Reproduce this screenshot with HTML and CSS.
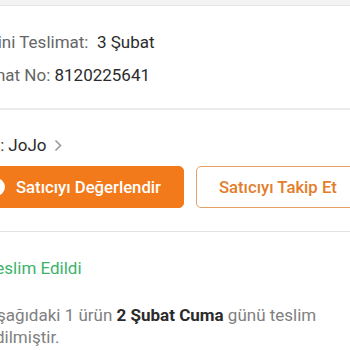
FILE: index.html
```html
<!DOCTYPE html>
<html lang="tr">
<head>
<meta charset="utf-8">
<link rel="stylesheet" href="styles.css">
</head>
<body>
<div class="topbar"></div>
<main class="page">
  <section class="info">
    <div class="row"><span class="label">Tahmini Teslimat:</span>&nbsp; <span class="value">3 Şubat</span></div>
    <div class="row"><span class="label">Teslimat No:</span> <span class="value num">8120225641</span></div>
  </section>
  <div class="divider thick"></div>
  <section class="seller">
    <div class="row seller-row"><span class="label">Satıcı:</span> <span class="value">JoJo</span>
      <svg class="chev" width="8" height="13" viewBox="0 0 8 13"><path d="M1.5 1.5 L6.5 6.5 L1.5 11.5" fill="none" stroke="#9a9a9a" stroke-width="1.6"/></svg>
    </div>
    <div class="actions">
      <button class="btn primary"><span class="btn-icon"></span>Satıcıyı Değerlendir</button>
      <button class="btn outline">Satıcıyı Takip Et</button>
    </div>
  </section>
  <div class="divider thin"></div>
  <section class="status">
    <div class="status-title">Teslim Edildi</div>
    <p class="message">Aşağıdaki 1 ürün <b>2 Şubat Cuma</b> günü teslim edilmiştir.</p>
  </section>
</main>
</body>
</html>
```

FILE: styles.css
```css
html, body {
  margin: 0;
  padding: 0;
  background: #fff;
  overflow: hidden;
}
body {
  width: 350px;
  height: 350px;
  font-family: Roboto, "Noto Sans", sans-serif;
  font-size: 17px;
  color: #333;
}
.topbar {
  height: 5px;
  background: #f3f3f3;
  border-bottom: 1px solid #e4e4e4;
}
.page {
  margin-left: -45px;
  width: 480px;
}
.info {
  padding: 25px 0 22px;
  display: flex;
  flex-direction: column;
  gap: 11px;
}
.row {
  line-height: 22px;
  white-space: nowrap;
}
.label {
  color: #666;
}
.value {
  color: #2b2b2b;
}
.divider.thick {
  height: 2px;
  background: #ececec;
}
.divider.thin {
  height: 1px;
  background: #e2e2e2;
}
.seller {
  padding: 24px 0 23px;
}
.seller-row {
  display: flex;
  align-items: center;
  gap: 4px;
  padding-left: 3px;
}
.seller-row .label { color: #444; }
.chev { margin-left: 3px; }
.actions {
  display: flex;
  gap: 12px;
  margin-top: 10px;
  padding-left: 9px;
}
.btn {
  height: 42px;
  border-radius: 5px;
  font-family: Roboto, "Noto Sans", sans-serif;
  font-size: 16.7px;
  font-weight: 500;
  padding: 0 22px;
  display: flex;
  align-items: center;
  white-space: nowrap;
  cursor: pointer;
}
.btn.primary {
  background: #f27a1a;
  border: 1px solid #f27a1a;
  color: #fff;
  gap: 11px;
}
.btn-icon {
  width: 18px;
  height: 18px;
  border-radius: 50%;
  background: #fff;
}
.btn.outline {
  background: #fff;
  border: 1.5px solid #e6a063;
  color: #e37d2b;
}
.status {
  margin-left: 31px;
  padding-top: 25px;
}
.status-title {
  color: #3bb36a;
  line-height: 22px;
}
.message {
  margin: 25px 0 0;
  line-height: 22px;
  color: #808080;
  width: 352px;
}
.message b {
  color: #2b2b2b;
  font-weight: 700;
}
```
